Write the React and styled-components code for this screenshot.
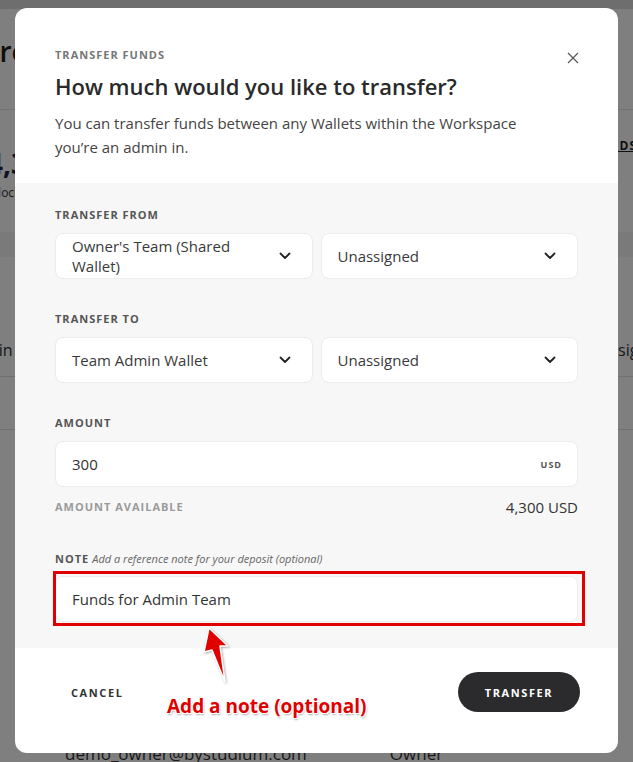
import React from 'react'
import styled, { createGlobalStyle } from 'styled-components'

const GlobalStyle = createGlobalStyle`
  html, body {
    margin: 0;
    padding: 0;
    background: #ffffff;
    overflow: hidden;
  }
  * { box-sizing: border-box; }
`

const Page = styled.div`
  width: 633px;
  height: 762px;
  position: relative;
  overflow: hidden;
  font-family: "Open Sans", "Liberation Sans", sans-serif;
  background: #ffffff;
`

const PageTop = styled.div`
  height: 9px;
  background: #dcdcdc;
`
const PageHeader = styled.div`
  height: 101px;
  display: flex;
  align-items: center;
  justify-content: space-between;
  border-bottom: 1px solid #e4e4e4;
  padding-bottom: 16px;
`
const PageTitle = styled.h1`
  margin: 0 0 0 -50px;
  font-size: 28px;
  font-weight: 600;
  color: #1d1d1d;
`
const Balance = styled.div`
  height: 122px;
  display: flex;
  justify-content: space-between;
  align-items: flex-start;
  padding-top: 34px;
`
const BalanceAmount = styled.div`
  margin-left: -13px;
  font-size: 28px;
  font-weight: 700;
  color: #1d2440;
`
const BalanceNote = styled.div`
  margin-left: -18px;
  margin-top: 2px;
  font-size: 12px;
  color: #333;
`
const PageLink = styled.div`
  margin-right: -4px;
  margin-top: -7px;
  font-size: 12px;
  font-weight: 700;
  letter-spacing: 1px;
  text-decoration: underline;
  color: #222;
`
const TableHead = styled.div`
  height: 25px;
  background: #f4f4f4;
`
const TableRow = styled.div`
  height: ${p => p.$h}px;
  display: flex;
  align-items: flex-end;
  justify-content: space-between;
  padding-bottom: 15px;
  border-bottom: 1px solid #e0e0e0;
  font-size: 16px;
  color: #333;
`
const CellLeft = styled.span`
  margin-left: ${p => p.$ml || 0}px;
`
const CellRight = styled.span`
  margin-right: -34px;
`
const BottomRow = styled.div`
  display: flex;
  gap: 83px;
  padding: 0 0 0 65px;
  margin-top: 312px;
  font-size: 17px;
  color: #333;
`

const Overlay = styled.div`
  position: absolute;
  inset: 0;
  background: rgba(0, 0, 0, 0.5);
  display: flex;
  justify-content: center;
  align-items: flex-start;
  padding-top: 8px;
`

const Modal = styled.div`
  width: 603px;
  background: #ffffff;
  border-radius: 12px;
  overflow: hidden;
  position: relative;
`

const Header = styled.div`
  padding: 39px 40px 24px;
  position: relative;
`
const Eyebrow = styled.div`
  font-size: 11px;
  line-height: 16px;
  font-weight: 700;
  letter-spacing: 1px;
  text-transform: uppercase;
  color: #777;
`
const Title = styled.h2`
  margin: 8px 0 0;
  font-size: 22px;
  line-height: 30px;
  font-weight: 600;
  color: #2a2a2a;
`
const Description = styled.p`
  margin: 10px 0 0;
  font-size: 15px;
  line-height: 24px;
  color: #444;
  max-width: 500px;
`
const Close = styled.button`
  position: absolute;
  top: 42px;
  right: 37px;
  width: 16px;
  height: 16px;
  padding: 0;
  border: 0;
  background: transparent;
  display: flex;
  align-items: center;
  justify-content: center;
  cursor: pointer;
`

const Body = styled.div`
  background: #f7f7f7;
  padding: 24px 40px 26px;
  display: flex;
  flex-direction: column;
`
const Field = styled.div`
  display: flex;
  flex-direction: column;
  margin-top: ${p => p.$mt || 0}px;
`
const Label = styled.div`
  font-size: 11px;
  line-height: 16px;
  font-weight: 700;
  letter-spacing: 1px;
  text-transform: uppercase;
  color: ${p => (p.$muted ? '#9a9a9a' : '#555')};
  margin-bottom: ${p => p.$mb ?? 10}px;
`
const Hint = styled.span`
  font-style: italic;
  font-weight: 400;
  letter-spacing: 0;
  text-transform: none;
  color: #666;
  margin-left: 3px;
`
const SelectRow = styled.div`
  display: grid;
  grid-template-columns: 1fr 1fr;
  gap: 8px;
`
const Select = styled.div`
  height: 46px;
  background: #ffffff;
  border: 1px solid #ececec;
  border-radius: 8px;
  display: flex;
  align-items: center;
  justify-content: space-between;
  padding: 0 21px 0 16px;
  font-size: 15px;
  line-height: 20px;
  color: #3a3a3a;
`
const SelectText = styled.span`
  max-width: 196px;
`
const Input = styled.div`
  height: 46px;
  background: #ffffff;
  border: 1px solid #ececec;
  border-radius: 8px;
  display: flex;
  align-items: center;
  justify-content: space-between;
  padding: 0 15px 0 16px;
  font-size: 15px;
  color: #333;
`
const Unit = styled.span`
  font-size: 9px;
  font-weight: 700;
  letter-spacing: 1px;
  color: #555;
`
const AvailableRow = styled.div`
  display: flex;
  justify-content: space-between;
  align-items: center;
  margin-top: 10px;
`
const AvailableValue = styled.span`
  font-size: 15px;
  color: #333;
`
const NoteWrap = styled.div`
  position: relative;
`
const Highlight = styled.div`
  position: absolute;
  left: -2px;
  right: -7px;
  top: -5px;
  bottom: -4px;
  border: 3px solid #e00000;
  pointer-events: none;
`

const Footer = styled.div`
  padding: 24px 38px 41px 40px;
  display: flex;
  justify-content: space-between;
  align-items: center;
`
const TextButton = styled.button`
  border: 0;
  background: transparent;
  padding: 12px 16px;
  font-family: inherit;
  font-size: 11px;
  font-weight: 700;
  letter-spacing: 1.6px;
  color: #333;
`
const PrimaryButton = styled.button`
  height: 40px;
  width: 122px;
  border: 0;
  border-radius: 20px;
  background: #2b2b2d;
  color: #ffffff;
  font-family: inherit;
  font-size: 11px;
  font-weight: 700;
  letter-spacing: 1.6px;
`

const ArrowMark = styled.svg`
  position: absolute;
  left: 198px;
  top: 622px;
  pointer-events: none;
  filter: drop-shadow(1px 1px 1px rgba(0, 0, 0, 0.3));
`
const CalloutText = styled.div`
  position: absolute;
  left: 167px;
  top: 693px;
  font-family: "Open Sans", "Noto Sans", sans-serif;
  font-size: 19px;
  line-height: 26px;
  font-weight: 700;
  color: #e00000;
  white-space: nowrap;
  pointer-events: none;
  text-shadow: -1px -1px 0 #fff, 1px -1px 0 #fff, -1px 1px 0 #fff, 1px 1px 0 #fff, 1px 2px 2px rgba(0,0,0,0.35);
`

const Chevron = () => (
  <svg width="12" height="8" viewBox="0 0 12 8" fill="none">
    <path d="M1.5 1.5 L6 6 L10.5 1.5" stroke="#222" strokeWidth="1.8" strokeLinecap="round" strokeLinejoin="round" />
  </svg>
)

const CloseIcon = () => (
  <svg width="12" height="12" viewBox="0 0 12 12" fill="none">
    <path d="M1 1 L11 11 M11 1 L1 11" stroke="#555" strokeWidth="1.2" />
  </svg>
)

// arrow drawn in page coordinates offset by (198, 622)
const Arrow = () => (
  <ArrowMark width="36" height="66" viewBox="198 622 36 66">
    <path
      d="M209 628 L228 646 L220 646 L225 682 L212 650 L204 652 Z"
      fill="#e00000"
      stroke="#ffffff"
      strokeWidth="1.5"
      strokeLinejoin="round"
    />
  </ArrowMark>
)

const BackgroundPage = () => (
  <>
    <PageTop />
    <PageHeader>
      <PageTitle>Share</PageTitle>
    </PageHeader>
    <Balance>
      <div>
        <BalanceAmount>4,300</BalanceAmount>
        <BalanceNote>Unlocked</BalanceNote>
      </div>
      <PageLink>ADD FUNDS</PageLink>
    </Balance>
    <TableHead />
    <TableRow $h={120}>
      <CellLeft $ml={-36}>Admin</CellLeft>
      <CellRight>Unassigned</CellRight>
    </TableRow>
    <TableRow $h={53} />
    <BottomRow>
      <span>demo_owner@bystudium.com</span>
      <span>Owner</span>
    </BottomRow>
  </>
)

const App = () => {
  return (
    <Page>
      <GlobalStyle />
      <BackgroundPage />
      <Overlay>
        <Modal>
          <Header>
            <Eyebrow>Transfer funds</Eyebrow>
            <Title>How much would you like to transfer?</Title>
            <Description>
              You can transfer funds between any Wallets within the Workspace you’re an admin in.
            </Description>
            <Close aria-label="Close"><CloseIcon /></Close>
          </Header>
          <Body>
            <Field>
              <Label>Transfer from</Label>
              <SelectRow>
                <Select><SelectText>Owner's Team (Shared Wallet)</SelectText><Chevron /></Select>
                <Select><SelectText>Unassigned</SelectText><Chevron /></Select>
              </SelectRow>
            </Field>
            <Field $mt={32}>
              <Label>Transfer to</Label>
              <SelectRow>
                <Select><SelectText>Team Admin Wallet</SelectText><Chevron /></Select>
                <Select><SelectText>Unassigned</SelectText><Chevron /></Select>
              </SelectRow>
            </Field>
            <Field $mt={32}>
              <Label>Amount</Label>
              <Input>
                <span>300</span>
                <Unit>USD</Unit>
              </Input>
              <AvailableRow>
                <Label $muted $mb={0}>Amount available</Label>
                <AvailableValue>4,300 USD</AvailableValue>
              </AvailableRow>
            </Field>
            <Field $mt={34}>
              <Label $mb={9}>Note<Hint>Add a reference note for your deposit (optional)</Hint></Label>
              <NoteWrap>
                <Input>Funds for Admin Team</Input>
                <Highlight />
              </NoteWrap>
            </Field>
          </Body>
          <Footer>
            <TextButton>CANCEL</TextButton>
            <PrimaryButton>TRANSFER</PrimaryButton>
          </Footer>
        </Modal>
        <Arrow />
        <CalloutText>Add a note (optional)</CalloutText>
      </Overlay>
    </Page>
  )
}

export default App
